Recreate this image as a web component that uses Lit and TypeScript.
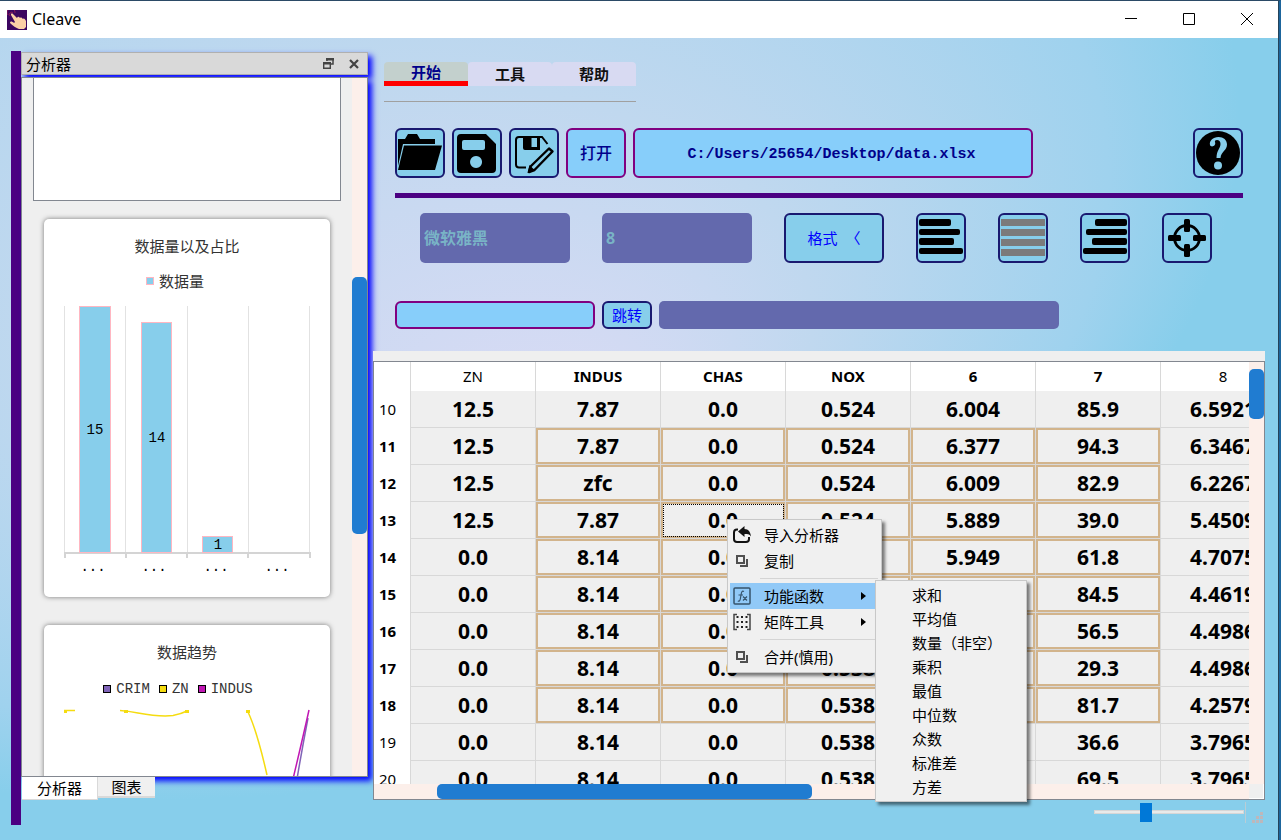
import { LitElement, html, svg, css } from "lit";
import { customElement } from "lit/decorators.js";
import { classMap } from "lit/directives/class-map.js";

interface Column {
  name: string;
  selected: boolean;
}

const COLUMNS: Column[] = [
  { name: "ZN", selected: false },
  { name: "INDUS", selected: true },
  { name: "CHAS", selected: true },
  { name: "NOX", selected: true },
  { name: "6", selected: true },
  { name: "7", selected: true },
  { name: "8", selected: false },
];

const ROWS: [number, string[]][] = [
  [10, ["12.5", "7.87", "0.0", "0.524", "6.004", "85.9", "6.5921"]],
  [11, ["12.5", "7.87", "0.0", "0.524", "6.377", "94.3", "6.3467"]],
  [12, ["12.5", "zfc", "0.0", "0.524", "6.009", "82.9", "6.2267"]],
  [13, ["12.5", "7.87", "0.0", "0.524", "5.889", "39.0", "5.4509"]],
  [14, ["0.0", "8.14", "0.0", "0.538", "5.949", "61.8", "4.7075"]],
  [15, ["0.0", "8.14", "0.0", "0.538", "6.096", "84.5", "4.4619"]],
  [16, ["0.0", "8.14", "0.0", "0.538", "5.834", "56.5", "4.4986"]],
  [17, ["0.0", "8.14", "0.0", "0.538", "5.935", "29.3", "4.4986"]],
  [18, ["0.0", "8.14", "0.0", "0.538", "5.99", "81.7", "4.2579"]],
  [19, ["0.0", "8.14", "0.0", "0.538", "5.456", "36.6", "3.7965"]],
  [20, ["0.0", "8.14", "0.0", "0.538", "5.727", "69.5", "3.7965"]],
];

const FUNCTIONS = ["求和", "平均值", "数量（非空）", "乘积", "最值", "中位数", "众数", "标准差", "方差"];

const ICONS = {
  folder: svg`
    <path d="M3 11h7l3-5h9l3 5h15v5H8L3 38z"/>
    <path d="M9 17.500h38L40 42H3z"/>`,
  save: svg`
    <path fill-rule="evenodd" d="M9 6h25l10 10v25a4 4 0 0 1-4 4H9a4 4 0 0 1-4-4V10a4 4 0 0 1 4-4zM12 12a2 2 0 0 0-2 2v6a2 2 0 0 0 2 2h19a2 2 0 0 0 2-2v-6a2 2 0 0 0-2-2zM24 28a6 6 0 1 0 .1 0z"/>`,
  saveAs: svg`
    <path fill="none" stroke="#000" stroke-width="2" d="M17 39.500H10a3 3 0 0 1-3-3V12a3 3 0 0 1 3-3h23l5.500 7"/>
    <path fill-rule="evenodd" d="M14 8h17v14H16a2 2 0 0 1-2-2zM22.500 10v9H28v-9z"/>
    <path fill="none" stroke="#000" stroke-width="2.400" stroke-linejoin="round" d="M40 20.500l3.500 3-18 18.500-5.500 2 1.500-5.500z"/>
    <path d="M18.500 45l2-8 5.500 5.500z"/>`,
  help: svg`
    <circle cx="25" cy="25" r="22"/>
    <path fill="#87ceeb" d="M17 17c-1-4 3-8 8.500-8 5 0 8.500 3 8.500 7.500 0 6-6 7-6.500 13.500h-4c0-8 4-9.500 4-14 0-2.500-1.500-4-3.500-4-1.500 0-2.500.7-2 2 1.500 4-4 6-5 3z"/>
    <circle cx="25" cy="37.500" r="4" fill="#87ceeb"/>`,
  left: svg`
    <rect x="3" y="6" width="32" height="7" rx="2"/><rect x="3" y="16" width="41" height="6" rx="2"/>
    <rect x="3" y="25" width="35" height="7" rx="2"/><rect x="3" y="35" width="44" height="6" rx="2"/>`,
  justify: svg`
    <g fill="#7b7b7b"><rect x="3" y="6" width="44" height="7"/><rect x="3" y="16" width="44" height="7"/>
    <rect x="3" y="26" width="44" height="7"/><rect x="3" y="36" width="44" height="7"/></g>`,
  right: svg`
    <rect x="15" y="6" width="32" height="7" rx="2"/><rect x="6" y="16" width="41" height="6" rx="2"/>
    <rect x="12" y="25" width="35" height="7" rx="2"/><rect x="3" y="35" width="44" height="6" rx="2"/>`,
  target: svg`
    <circle cx="25" cy="25" r="12.500" fill="none" stroke="#000" stroke-width="2.800"/>
    <rect x="22" y="6" width="6" height="13" rx="1.500"/><rect x="22" y="31" width="6" height="13" rx="1.500"/>
    <rect x="6" y="22" width="13" height="6" rx="1.500"/><rect x="31" y="22" width="13" height="6" rx="1.500"/>`,
};

const MENU_ICONS = {
  share: svg`
    <path fill="none" stroke="#111" stroke-width="2" d="M5 3.500H4a3 3 0 0 0-3 3V13a3 3 0 0 0 3 3h9a3 3 0 0 0 3-3v-2"/>
    <path fill="#111" d="M5 5.500l6.500-5.500v3c4 0 6 3 6.500 7.500-1.500-2.500-3.500-2.500-6.500-2.500v3z"/>`,
  copy: svg`
    <path fill="none" stroke="#505050" stroke-width="2" d="M4 4h7v7H4zM14 7v7H7"/>`,
  fx: svg`
    <rect x="1" y="1" width="16" height="16" rx="1" fill="none" stroke="#36536b" stroke-width="1.500"/>
    <path fill="none" stroke="#36536b" stroke-width="1.200" d="M11 4.500C9 3.500 8.500 5 8 8l-.7 4c-.4 2-1.300 2.500-2.500 2M5.500 8h4.500M10 9.500l4 4M14 9.500l-4 4"/>`,
  matrix: svg`
    <path fill="none" stroke="#444" stroke-width="1.500" d="M4 1.500H1v15h3M14 1.500h3v15h-3"/>
    <path stroke="#222" stroke-width="2" stroke-dasharray="2 2.500" d="M3.500 4h11M3.500 9h11M3.500 14h11"/>`,
};

@customElement("app-root")
export class AppRoot extends LitElement {
  static styles = css`
    :host {
      display: block;
      height: 100vh;
      overflow: hidden;
      color: #000;
      font: 15px/20px "Noto Sans", "Noto Sans CJK SC", sans-serif;
    }
    * { box-sizing: border-box; }
    button, input, select, textarea { font: inherit; margin: 0; padding: 0; border: 0; border-radius: 0; }
    button { background: none; color: inherit; }
    svg { display: block; }

    .window {
      position: relative;
      display: flex;
      flex-direction: column;
      height: 100%;
      border-top: 1px solid #2b4a66;
      border-right: 2px solid #1d659c;
      background: #87ceeb;
    }
    .titlebar {
      display: flex;
      align-items: center;
      height: 37px;
      flex: none;
      padding: 0 2px 0 7px;
      background: #fff;
      border-right: 1px solid #24435a;
    }
    .titlebar h1 { flex: 1; margin: 0 0 0 5px; font-size: 16px; line-height: 34px; height: 36px; font-weight: 400; }
    .caption { width: 58px; height: 36px; padding-bottom: 1px; display: grid; place-items: center; }

    .body {
      position: relative;
      flex: 1;
      min-height: 0;
      display: flex;
      gap: 5px;
      padding: 13px 13px 0 11px;
      border-right: 1px solid #24435a;
    }
    .backdrop { position: absolute; left: 0; top: 0; width: 100%; height: 100%; }

    .side {
      position: relative;
      display: flex;
      flex-direction: column;
      width: 357px;
      flex: none;
      margin-bottom: 15px;
      padding: 1px 0 26px;
      border-left: 10px solid #4b0082;
    }
    .dock-title {
      display: flex;
      align-items: center;
      height: 23px;
      margin-bottom: 2px;
      padding: 0 4px;
      background: #d9d9d9;
      border: 1px solid #b0b0b0;
      box-shadow: 4px 4px 6px #00f;
    }
    .dock-title h2 { flex: 1; margin: 0; font-size: 15px; line-height: 20px; font-weight: 400; }
    .dock-title button { width: 18px; height: 18px; display: grid; place-items: center; margin-left: 8px; }
    .panel {
      position: relative;
      display: flex;
      flex: 1;
      min-height: 0;
      border: 1px solid #828790;
      background: #efefef;
      box-shadow: 4px 4px 6px #00f;
    }
    .panel-content { flex: 1; min-width: 0; overflow: hidden; padding: 0 11px; }
    .notes {
      display: block;
      width: 100%;
      height: 123px;
      resize: none;
      background: #fff;
      border: 1px solid #828790;
      border-top: 0;
    }
    .card {
      margin: 18px 11px 28px;
      background: #fff;
      border-radius: 5px;
      box-shadow: 0 0 5px #777;
      color: #333;
    }
    .card h3 { margin: 0; padding: 16px 0 2px; font-size: 15px; line-height: 22px; font-weight: 400; text-align: center; }
    .legend { display: flex; justify-content: center; gap: 9px; height: 20px; margin-top: 12px; padding-right: 24px; }
    .legend span { display: flex; align-items: center; gap: 5px; }
    .legend i { width: 8px; height: 8px; border: 1px solid #000; }
    .mono { font-family: "Liberation Mono", "Noto Sans CJK SC", monospace; font-size: 14px; padding: 4px 18px 0 0; }
    .chart { width: 100%; }
    .chart text { font: 14px "Liberation Mono", monospace; fill: #000; text-anchor: middle; }

    .vscroll { width: 15px; flex: none; background: #fcefea; }
    .thumb { background: #207cd1; border-radius: 5px; }
    .vscroll .thumb { width: 15px; }
    .vscroll.dock-scroll .thumb { height: 257px; margin-top: 199px; }
    .vscroll.table-scroll .thumb { height: 50px; margin-top: 7px; }
    .hscroll { height: 15px; flex: 1; background: #fcefea; padding-left: 63px; }
    .hscroll .thumb { width: 375px; height: 15px; }

    .dock-tabs { position: relative; display: flex; align-items: flex-start; height: 22px; padding-left: 1px; }
    .dock-tabs button { height: 21px; width: 57px; background: #f0f0f0; border: 1px solid #d9d9d9; border-width: 0 0 2px; line-height: 18px; }
    .dock-tabs button.active { height: 23px; width: 76px; background: #fff; border-width: 0 1px 1px 0; }

    .main { position: relative; display: flex; flex-direction: column; flex: 1; min-width: 0; }
    .ribbon { padding: 11px 22px 0 11px; height: 300px; flex: none; }
    .tabs { display: inline-grid; grid-template-columns: repeat(3, 84px); padding-bottom: 15px; border-bottom: 1px solid #a0a0a0; vertical-align: top; }
    .tabs button { height: 24px; background: #d8daf2; border-radius: 4px 4px 0 0; font-weight: 700; color: #111; }
    .tabs button.active { background: linear-gradient(#c3d0cd 19px, #f00 19px); color: #00008b; padding-bottom: 4px; }
    .tools { margin: 26px 0 0 11px; }
    .row { display: flex; gap: 7px; align-items: center; }
    .file-row { padding-bottom: 15px; border-bottom: 5px solid #4b0082; }
    .format-row { gap: 32px; padding: 15px 0 38px 25px; }
    .spacer { flex: 1; }
    .tool { width: 50px; height: 50px; flex: none; background: #87ceeb; border: 2px solid #191970; border-radius: 6px; }
    .tool svg { width: 50px; height: 50px; margin: -2px; }
    .text-tool { background: #87ceeb; border: 2px solid #191970; border-radius: 6px; color: #00f; }
    .format { width: 100px; height: 50px; white-space: pre; }
    .jump { width: 50px; height: 28px; line-height: 24px; }
    .open { width: 60px; height: 50px; background: #87cefa; border: 2px solid #800080; border-radius: 6px; color: #00008b; font-size: 16px; font-weight: 500; }
    .field { background: #87cefa; border: 2px solid #800080; border-radius: 6px; color: #00008b; }
    .path { width: 400px; min-width: 0; height: 50px; padding: 2px 3px 0 0; text-align: center; font: 700 15px "Liberation Mono", monospace; }
    .cell-name { width: 200px; height: 28px; padding: 0 4px; }
    .locked { background: #6369ad; border-radius: 5px; color: #79b4c6; opacity: 1; }
    .formula { width: 400px; height: 28px; padding: 0 4px; }
    select.locked { appearance: none; width: 150px; height: 50px; padding: 0 4px; font-size: 16px; font-weight: 700; }

    .table-area { flex: 1; min-height: 0; display: flex; flex-direction: column; padding-top: 10px; background: #efefef; }
    .table-frame { flex: 1; min-height: 0; border: 1px solid #828790; display: flex; flex-direction: column; }
    .table-view { flex: 1; min-height: 0; display: flex; }
    .table-clip { flex: 1; min-width: 0; overflow: hidden; background: #efefef; }
    .bottom-scroll { display: flex; height: 15px; }
    .corner { width: 15px; background: #efefef; border: 1px solid #fff; border-width: 0 1px 1px 0; }
    table { border-collapse: separate; border-spacing: 0; table-layout: fixed; width: 912px; }
    th, td { padding: 0; border-right: 1px solid #d8d8d8; text-align: center; overflow: hidden; white-space: nowrap; }
    thead th { height: 29px; background: #fff; font-size: 15px; line-height: 20px; font-weight: 400; padding-bottom: 1px; }
    tbody th { width: 37px; background: #fff; font-size: 15px; font-weight: 400; text-align: left; padding: 0 0 2px 5px; }
    thead th:first-child { width: 37px; }
    th.selected { font-weight: 700; }
    thead th.selected { padding-bottom: 2px; }
    td { height: 37px; border-bottom: 1px solid #d8d8d8; font-size: 21px; line-height: 28px; font-weight: 700; }
    td.selected { box-shadow: inset 0 0 0 2px #d2b48c; }
    td.focused { outline: 1px dotted #000; outline-offset: -3px; }

    .status { height: 40px; flex: none; display: flex; justify-content: flex-end; align-items: flex-start; padding-top: 2px; }
    .zoom { appearance: none; width: 150px; height: 20px; margin-right: 1px; background: none; }
    .zoom::-webkit-slider-runnable-track { height: 4px; background: #e7eaea; border: 1px solid #d6d6d6; }
    .zoom::-webkit-slider-thumb { appearance: none; width: 12px; height: 19px; margin-top: -8px; background: #0078d7; }
    .grip { border-left: 1px solid #b9cdd6; width: 20px; height: 21px; padding: 10px 0 0 6px; }

    .menu { position: absolute; margin: 0; padding: 2px; list-style: none; background: #f0f0f0; border: 1px solid #c8c8c8; box-shadow: 3px 3px 3px #00000080; }
    .menu button { display: flex; align-items: center; width: 100%; text-align: left; white-space: nowrap; }
    .menu .icon { width: 18px; height: 18px; margin: 0 13px 0 3px; }
    .menu .label { flex: 1; }
    .menu .arrow { width: 5px; height: 8px; margin-right: 13px; }
    .context { left: 727px; top: 518px; width: 155px; }
    .context button { height: 26px; }
    .context button.active { background: #91c9f7; }
    .context .divider { height: 9px; padding: 4px 1px 4px 30px; }
    .context .divider::before { content: ""; display: block; height: 1px; background: #d4d4d4; }
    .functions { left: 875px; top: 579px; width: 152px; }
    .functions button { height: 24px; padding-left: 34px; }
  `;

  private tool(name: keyof typeof ICONS, label: string) {
    return html`<button class="tool" aria-label=${label}><svg viewBox="0 0 50 50">${ICONS[name]}</svg></button>`;
  }

  private menuItem(icon: keyof typeof MENU_ICONS, label: string, submenu = false, active = false) {
    return html`<li>
      <button class=${classMap({ active })}>
        <svg class="icon" viewBox="0 0 18 18">${MENU_ICONS[icon]}</svg>
        <span class="label">${label}</span>
        ${submenu ? html`<svg class="arrow" viewBox="0 0 5 8"><path d="M0 0l5 4-5 4z" /></svg>` : null}
      </button>
    </li>`;
  }

  private renderBars() {
    const bars = [
      { value: 15, x: 35.5, width: 31 },
      { value: 14, x: 97.5, width: 30 },
      { value: 1, x: 158.5, width: 30 },
    ];
    const unit = 16.4;
    return html`<svg class="chart" viewBox="0 0 286 306" role="img" aria-label="数据量以及占比">
      <path d="M20.500 15v247M81.500 15v247M143.500 15v247M204.500 15v247M265.500 15v247" stroke="#e2e2e2" fill="none" />
      <path d="M20 262H267M21 261v6M82 261v6M143 261v6M204 261v6M266 261v6" stroke="#d4d4d4" stroke-width="2" fill="none" />
      ${bars.map((b) => {
        const height = Math.round(b.value * unit);
        return svg`<rect x=${b.x} y=${261.5 - height} width=${b.width} height=${height} fill="#87ceeb" stroke="#ffb6c1" />
          <text x=${b.x + 15.5} y=${266 - height / 2}>${b.value}</text>`;
      })}
      ${[49, 110, 172, 233].map((x) => svg`<text x=${x} y="280" font-weight="700">...</text>`)}
    </svg>`;
  }

  private renderTrend() {
    return html`<svg class="chart" viewBox="0 0 286 306" role="img" aria-label="数据趋势">
      <g fill="none" stroke-width="1.500">
        <path stroke="#8064b8" d="M264 21Q258 52 252 88Q246 120 239 150" />
        <path stroke="#c117b4" d="M265 13Q259 40 249 82Q243 110 235 150" />
        <path stroke="#f5dc10" d="M20 13.500h11M76 13.500Q84 14 94 16Q116 20 129 18.500Q137 17 143 14M204 15Q213 34 223 78" />
      </g>
      <path fill="#f5dc10" d="M20 13h3v3h-3zM80 13h4v3h-4zM141 13h4v3h-4zM202 13h4v3h-4z" />
    </svg>`;
  }

  private renderDock() {
    return html`<aside class="side">
      <header class="dock-title">
        <h2>分析器</h2>
        <button aria-label="浮动">
          <svg width="11" height="11" viewBox="0 0 11 11"><path fill="none" stroke="#444" d="M4 3V1h6v5H8" stroke-width="1.500" /><path d="M3 0h8v2.500H3zM0 4h8v2.500H0z" fill="#444" /><path fill="none" stroke="#444" d="M.7 5h6.600v5.300H.7z" stroke-width="1.400" /></svg>
        </button>
        <button aria-label="关闭面板">
          <svg width="10" height="10" viewBox="0 0 10 10"><path d="M1 1l8 8M9 1L1 9" stroke="#444" stroke-width="2.200" /></svg>
        </button>
      </header>
      <div class="panel">
        <div class="panel-content">
          <textarea class="notes" aria-label="分析结果"></textarea>
          <section class="card">
            <h3>数据量以及占比</h3>
            <div class="legend"><span><i style="background:#87ceeb;border-color:#ffb6c1"></i>数据量</span></div>
            ${this.renderBars()}
          </section>
          <section class="card">
            <h3>数据趋势</h3>
            <div class="legend mono">
              <span><i style="background:#8064b8"></i>CRIM</span>
              <span><i style="background:#f5dc10"></i>ZN</span>
              <span><i style="background:#c117b4"></i>INDUS</span>
            </div>
            ${this.renderTrend()}
          </section>
        </div>
        <div class="vscroll dock-scroll"><div class="thumb"></div></div>
      </div>
      <nav class="dock-tabs"><button class="active">分析器</button><button>图表</button></nav>
    </aside>`;
  }

  private renderRibbon() {
    return html`<div class="ribbon">
      <nav class="tabs"><button class="active">开始</button><button>工具</button><button>帮助</button></nav>
      <div class="tools">
        <div class="row file-row">
          ${this.tool("folder", "打开文件夹")} ${this.tool("save", "保存")} ${this.tool("saveAs", "另存为")}
          <button class="open">打开</button>
          <input class="field path" aria-label="文件路径" value="C:/Users/25654/Desktop/data.xlsx" />
          <span class="spacer"></span>
          ${this.tool("help", "帮助")}
        </div>
        <div class="row format-row">
          <select class="locked" aria-label="字体" disabled><option>微软雅黑</option></select>
          <select class="locked" aria-label="字号" disabled><option>8</option></select>
          <button class="text-tool format">格式  〈</button>
          ${this.tool("left", "左对齐")} ${this.tool("justify", "两端对齐")} ${this.tool("right", "右对齐")}
          ${this.tool("target", "居中")}
        </div>
        <div class="row">
          <input class="field cell-name" aria-label="单元格" />
          <button class="text-tool jump">跳转</button>
          <input class="locked formula" aria-label="内容" disabled />
        </div>
      </div>
    </div>`;
  }

  private renderTable() {
    return html`<div class="table-area">
      <div class="table-frame">
        <div class="table-view">
          <div class="table-clip">
            <table>
              <thead>
                <tr>
                  <th></th>
                  ${COLUMNS.map((c) => html`<th scope="col" class=${classMap({ selected: c.selected })}>${c.name}</th>`)}
                </tr>
              </thead>
              <tbody>
                ${ROWS.map(([id, cells]) => {
                  const inRange = id >= 11 && id <= 18;
                  return html`<tr>
                    <th scope="row" class=${classMap({ selected: inRange })}>${id}</th>
                    ${cells.map(
                      (value, i) =>
                        html`<td class=${classMap({ selected: inRange && COLUMNS[i].selected, focused: id === 13 && i === 2 })}>${value}</td>`
                    )}
                  </tr>`;
                })}
              </tbody>
            </table>
          </div>
          <div class="vscroll table-scroll"><div class="thumb"></div></div>
        </div>
        <div class="bottom-scroll"><div class="hscroll"><div class="thumb"></div></div><div class="corner"></div></div>
      </div>
    </div>`;
  }

  render() {
    return html`<div class="window">
      <header class="titlebar">
        <svg width="20" height="20" viewBox="0 0 20 20">
          <path fill="#3c0560" d="M0 0h20v20H0z" />
          <path fill="none" stroke="#a02058" d="M1 5a4 4 0 1 1 7-2M3 6a2 2 0 1 1 3-3" stroke-width=".8" />
          <path fill="#fbcfa6" d="M4 4c1-1 2 0 3 1l3 3c1-2 2-1 3 0 1-1 2 0 3 1 1-1 2 0 3 2v6l-2 2h-5c-3-1-6-3-9-6 0-2 2-2 4 0l1-1-4-7z" />
        </svg>
        <h1>Cleave</h1>
        <button class="caption" aria-label="最小化"><svg width="12" height="12"><path d="M0 5.500h12" stroke="#000" /></svg></button>
        <button class="caption" aria-label="最大化"><svg width="12" height="12"><path d="M.5.5h11v11H.5z" fill="none" stroke="#000" /></svg></button>
        <button class="caption" aria-label="关闭"><svg width="12" height="12"><path d="M0 0l12 12M12 0L0 12" stroke="#000" /></svg></button>
      </header>
      <div class="body">
        <svg class="backdrop" viewBox="0 0 1 1" preserveAspectRatio="none" aria-hidden="true">
          <defs>
            <radialGradient id="sky" cx=".12" cy=".1" r=".85" fx=".455" fy=".49">
              <stop offset="0" stop-color="#dadbf5" />
              <stop offset=".35" stop-color="#c0d8ef" />
              <stop offset=".8" stop-color="#9fd2ee" />
              <stop offset="1" stop-color="#87ceeb" />
            </radialGradient>
          </defs>
          <rect width="1" height="1" fill="url(#sky)" />
        </svg>
        ${this.renderDock()}
        <main class="main">
          ${this.renderRibbon()} ${this.renderTable()}
          <footer class="status">
            <input class="zoom" type="range" min="0" max="300" value="100" aria-label="缩放" />
            <div class="grip">
              <svg width="11" height="11" viewBox="0 0 11 11" fill="#bdb7bb"><path d="M8 0h3v3H8zM8 4h3v3H8zM8 8h3v3H8zM4 4h3v3H4zM4 8h3v3H4zM0 8h3v3H0z" /></svg>
            </div>
          </footer>
        </main>
      </div>
      <ul class="menu context">
        ${this.menuItem("share", "导入分析器")} ${this.menuItem("copy", "复制")}
        <li class="divider"></li>
        ${this.menuItem("fx", "功能函数", true, true)} ${this.menuItem("matrix", "矩阵工具", true)}
        <li class="divider"></li>
        ${this.menuItem("copy", "合并(慎用)")}
      </ul>
      <ul class="menu functions">
        ${FUNCTIONS.map((name) => html`<li><button>${name}</button></li>`)}
      </ul>
    </div>`;
  }
}
